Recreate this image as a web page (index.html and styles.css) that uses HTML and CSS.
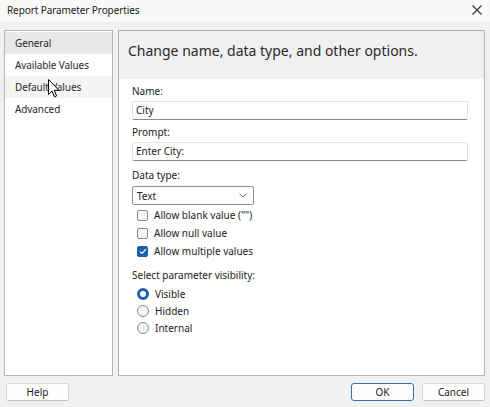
FILE: index.html
```html
<!DOCTYPE html>
<html lang="en">

<head>
  <meta charset="UTF-8">
  <title>Report Parameter Properties</title>
  <link rel="stylesheet" href="styles.css">
</head>

<body>

  <div class="dialog">
    <div class="titlebar">
      <span class="title">Report Parameter Properties</span>
      <svg class="close" width="10" height="10" viewBox="0 0 10 10">
        <path d="M0.5 0.5 L9.5 9.5 M9.5 0.5 L0.5 9.5" stroke="#333" stroke-width="1.1" fill="none" />
      </svg>
    </div>

    <div class="body">
      <div class="main">
        <ul class="nav">
          <li class="nav-item selected">General</li>
          <li class="nav-item">Available Values</li>
          <li class="nav-item hover">Default Values</li>
          <li class="nav-item">Advanced</li>
          <svg class="cursor" width="12" height="19" viewBox="0 0 12 19">
            <path d="M0.5 0.5 L0.5 15.5 L4 12 L6.5 17.8 L8.6 16.9 L6.2 11.3 L11 11.3 Z" fill="#fff" stroke="#000" stroke-width="1" stroke-linejoin="round" />
          </svg>
        </ul>

        <div class="panel">
          <div class="panel-head">Change name, data type, and other options.</div>
          <div class="panel-body">
            <div class="label first">Name:</div>
            <div class="input">City</div>

            <div class="label">Prompt:</div>
            <div class="input">Enter City:</div>

            <div class="label label-type">Data type:</div>
            <div class="select">
              <span>Text</span>
              <svg width="8" height="5" viewBox="0 0 8 5">
                <path d="M0.5 0.5 L4 4 L7.5 0.5" stroke="#777" stroke-width="1" fill="none" />
              </svg>
            </div>

            <div class="check-row"><span class="box"></span>Allow blank value ("")</div>
            <div class="check-row"><span class="box"></span>Allow null value</div>
            <div class="check-row">
              <span class="box checked">
                <svg width="8" height="7" viewBox="0 0 8 7">
                  <path d="M1 3.6 L3 5.5 L7 1.2" stroke="#fff" stroke-width="1.2" fill="none" />
                </svg>
              </span>Allow multiple values
            </div>

            <div class="label label-vis">Select parameter visibility:</div>
            <div class="radio-row first-radio"><span class="radio on"></span>Visible</div>
            <div class="radio-row"><span class="radio"></span>Hidden</div>
            <div class="radio-row"><span class="radio"></span>Internal</div>
          </div>
        </div>
      </div>

      <div class="footer">
        <button class="btn">Help</button>
        <div class="footer-right">
          <button class="btn btn-ok">OK</button>
          <button class="btn">Cancel</button>
        </div>
      </div>
    </div>
  </div>

</body>

</html>
```

FILE: styles.css
```css
body {
  margin: 0;
  font-family: "Noto Sans", "Open Sans", sans-serif;
  font-size: 10px;
  color: #1b1b1b;
  background-color: #f0f0f0;
}

.dialog {
  width: 490px;
  height: 407px;
  display: flex;
  flex-direction: column;
}

.titlebar {
  height: 22px;
  background-color: #f9f9f9;
  display: flex;
  align-items: center;
  justify-content: space-between;
  padding: 0 8px 2px 7px;
}

.title {
  font-size: 10px;
  letter-spacing: -0.1px;
}

.body {
  flex: 1;
  display: flex;
  flex-direction: column;
  padding: 8px 5px 6px 4px;
}

.main {
  display: flex;
  gap: 5px;
  height: 346px;
}

.nav {
  position: relative;
  list-style: none;
  margin: 0;
  padding: 1px 0 0;
  width: 107px;
  background: #fff;
  border: 1px solid #b5b5b5;
}

.nav-item {
  height: 22px;
  line-height: 22px;
  padding-left: 10px;
  color: #2a2a2a;
  letter-spacing: -0.1px;
}

.nav-item.selected {
  background-color: #e8e8e8;
}

.nav-item.hover {
  background-color: #f4f4f4;
}

.cursor {
  position: absolute;
  left: 43px;
  top: 48px;
}

.panel {
  flex: 1;
  background: #fff;
  border: 1px solid #b5b5b5;
  display: flex;
  flex-direction: column;
}

.panel-head {
  height: 48px;
  background-color: #f0f0f0;
  font-size: 14px;
  color: #2a2a2a;
  padding: 10px 0 0 9px;
  box-sizing: border-box;
}

.panel-body {
  padding: 1px 16px 0 13px;
}

.label {
  height: 14px;
  line-height: 14px;
  margin-top: 5px;
}

.label.first {
  margin-top: 4px;
}

.label-type {
  margin-top: 7px;
}

.label-vis {
  margin-top: 8px;
}

.input {
  margin-top: 3px;
  height: 19px;
  box-sizing: border-box;
  border: 1px solid #e2e2e2;
  border-bottom-color: #8a8a8a;
  border-radius: 2px;
  padding-left: 3px;
  line-height: 17px;
}

.select {
  margin: 4px 0 1px;
  width: 122px;
  height: 19px;
  box-sizing: border-box;
  border: 1px solid #8f8f8f;
  border-radius: 2px;
  padding: 0 6px 0 4px;
  display: flex;
  align-items: center;
  justify-content: space-between;
}

.check-row,
.radio-row {
  display: flex;
  align-items: center;
  height: 18px;
  padding-left: 5px;
  gap: 6px;
}

.radio-row {
  height: 17px;
}

.first-radio {
  margin-top: 3px;
}

.box {
  width: 11px;
  height: 11px;
  box-sizing: border-box;
  border: 1px solid #8a8a8a;
  border-radius: 2px;
  background: #f7f7f7;
  display: flex;
  align-items: center;
  justify-content: center;
}

.box.checked {
  background: #1d5fb0;
  border-color: #1d5fb0;
}

.radio {
  width: 12px;
  height: 12px;
  box-sizing: border-box;
  border: 1px solid #8a8a8a;
  border-radius: 50%;
  background: #f7f7f7;
}

.radio.on {
  border: 3.5px solid #1d5fb0;
  background: #fff;
}

.footer {
  margin-top: 7px;
  display: flex;
  justify-content: space-between;
  padding-left: 2px;
}

.footer-right {
  display: flex;
  gap: 8px;
}

.btn {
  width: 63px;
  height: 18px;
  padding: 0;
  font-family: inherit;
  font-size: 10px;
  color: #1b1b1b;
  background: #fdfdfd;
  border: 1px solid #d6d6d6;
  border-bottom-color: #c0c0c0;
  border-radius: 3px;
}

.btn-ok {
  border: 1px solid #3a6ea8;
}
```
